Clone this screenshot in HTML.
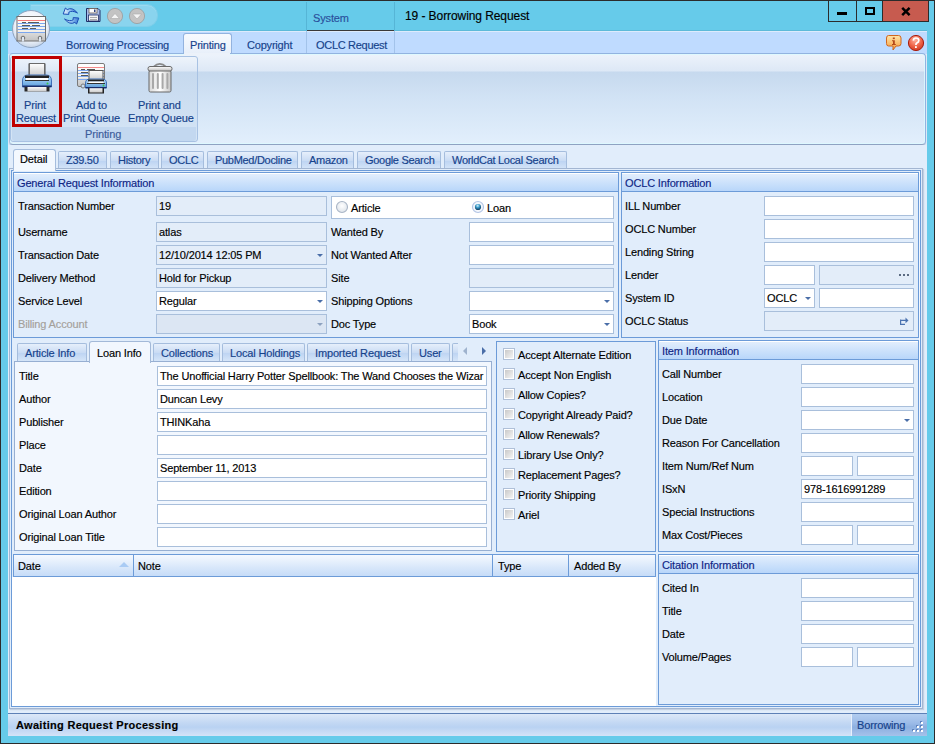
<!DOCTYPE html><html><head><meta charset="utf-8"><style>
*{margin:0;padding:0;box-sizing:content-box}
html,body{width:935px;height:744px;overflow:hidden;background:#66CBEA}
body{position:relative;font-family:"Liberation Sans",sans-serif;font-size:11px;color:#000}
.a{position:absolute}
.t{white-space:nowrap;line-height:13px;font-size:11px;letter-spacing:-0.15px;-webkit-text-stroke:0.15px currentColor}
.tb{border:1px solid #A9BFDB}
.grp{border:1px solid #6C9BD8;background:#E1EDFB}
.ghd{background:linear-gradient(#E4EFFD,#B8D6FA);border-bottom:1px solid #6C9BD8;box-shadow:inset 0 1px 0 #fff}
</style></head><body>
<div class="a" style="left:0px;top:0px;width:935px;height:744px;border:0;background:#66CBEA"></div>
<div class="a" style="left:0px;top:0px;width:935px;height:1px;background:#2B2B2B"></div>
<div class="a" style="left:0px;top:743px;width:935px;height:1px;background:#2B2B2B"></div>
<div class="a" style="left:0px;top:0px;width:1px;height:744px;background:#2B2B2B"></div>
<div class="a" style="left:934px;top:0px;width:1px;height:744px;background:#2B2B2B"></div>
<div class="a" style="left:30px;top:4px;width:126px;height:21px;border-radius:0 11px 11px 0;background:#8AD4EE;border:1px solid #7FCFEA;box-shadow:inset 0 1px 0 #9ADAF0"></div>
<div class="a" style="left:306px;top:2px;width:1px;height:52px;background:#56B5D6"></div>
<div class="a" style="left:394px;top:2px;width:1px;height:52px;background:#56B5D6"></div>
<div class="a" style="left:307px;top:30px;width:87px;height:1px;background:#3A3A3A"></div>
<div class="a t" style="left:313px;top:12px;color:#2A4F9C">System</div>
<div class="a t" style="left:405px;top:10px;font-size:12px;letter-spacing:-0.08px;color:#000">19 - Borrowing Request</div>
<div class="a" style="left:828px;top:0px;width:101px;height:22px;background:#2B2B2B"></div>
<div class="a" style="left:829px;top:1px;width:27px;height:20px;background:#66CBEA"></div>
<div class="a" style="left:857px;top:1px;width:25px;height:20px;background:#66CBEA"></div>
<div class="a" style="left:883px;top:1px;width:45px;height:20px;background:#C75B4F"></div>
<div class="a" style="left:837px;top:12px;width:10px;height:3px;background:#000"></div>
<div class="a" style="left:865px;top:7px;width:6px;height:4px;border:2px solid #000"></div>
<svg class="a" style="left:901px;top:7px" width="10" height="9" viewBox="0 0 10 9"><path d="M1.2 0.9 L8.6 8.1 M8.6 0.9 L1.2 8.1" stroke="#000" stroke-width="2.5"/></svg>
<div class="a" style="left:8px;top:30px;width:919px;height:1px;background:#5DBAD9"></div>
<div class="a" style="left:307px;top:30px;width:87px;height:1px;background:#3A3A3A"></div>
<div class="a" style="left:8px;top:31px;width:919px;height:23px;background:#BFDBFF;border-top:1px solid #DDEBFC"></div>
<div class="a" style="left:183px;top:33px;width:47px;height:22px;border:1px solid #93B3DF;border-bottom:0;border-radius:3px 3px 0 0;background:linear-gradient(#F7FAFE,#E6EEF9)"></div>
<div class="a t" style="left:66px;top:39px;color:#15428B;letter-spacing:-0.2px">Borrowing Processing</div>
<div class="a t" style="left:190px;top:39px;color:#15428B;letter-spacing:-0.2px">Printing</div>
<div class="a t" style="left:247px;top:39px;color:#15428B;letter-spacing:-0.2px">Copyright</div>
<div class="a t" style="left:316px;top:39px;color:#15428B;letter-spacing:-0.3px">OCLC Request</div>
<div class="a" style="left:306px;top:31px;width:1px;height:23px;background:#A3C3EA"></div>
<div class="a" style="left:394px;top:31px;width:1px;height:23px;background:#A3C3EA"></div>
<div class="a" style="left:8px;top:54px;width:919px;height:91px;background:#E1EDFB"></div>
<div class="a" style="left:9px;top:53px;width:915px;height:90px;border:1px solid #92B3E0;border-bottom-color:#8EA2C2;border-left-color:#A9BEDD;border-radius:4px;box-shadow:inset 0 0 0 1px rgba(220,250,255,0.8),0 1px 1px rgba(110,130,170,0.35);background:linear-gradient(#EDF3FB 0,#DDE8F6 17px,#C6D9EE 18px,#D2E3F5 50%,#E2EFFC 100%)"></div>
<div class="a" style="left:184px;top:53px;width:46px;height:2px;background:#ECF2FA"></div>
<div class="a" style="left:10px;top:56px;width:186px;height:84px;border:1px solid #A8C2E3;border-radius:3px;background:linear-gradient(#EEF4FB 0,#DDE8F6 14px,#C6D9EE 15px,#D5E5F6 100%)"></div>
<div class="a" style="left:12px;top:127px;width:184px;height:14px;background:#C3D8F0;border-radius:0 0 3px 3px"></div>
<div class="a t" style="left:85px;top:128px;color:#3C5C9A">Printing</div>
<div class="a" style="left:12px;top:56px;width:44px;height:65px;border:3px solid #C00000"></div>
<div class="a t" style="left:24px;top:99px;color:#15428B">Print</div>
<div class="a t" style="left:16px;top:112px;color:#15428B">Request</div>
<div class="a t" style="left:76px;top:99px;color:#15428B">Add to</div>
<div class="a t" style="left:63px;top:112px;color:#15428B">Print Queue</div>
<div class="a t" style="left:138px;top:99px;color:#15428B">Print and</div>
<div class="a t" style="left:128px;top:112px;color:#15428B">Empty Queue</div>
<svg class="a" style="left:22px;top:63px" width="32" height="32" viewBox="0 0 32 32">
<defs><linearGradient id="pb22" x1="0" y1="0" x2="0" y2="1"><stop offset="0" stop-color="#B9DBF7"/><stop offset="0.5" stop-color="#8EC2EE"/><stop offset="1" stop-color="#5A9BDA"/></linearGradient>
<linearGradient id="pp22" x1="0" y1="0" x2="0" y2="1"><stop offset="0" stop-color="#FFFFFF"/><stop offset="1" stop-color="#C8C8C8"/></linearGradient></defs>
<rect x="6.5" y="0.5" width="17" height="13" fill="#4A4A4A"/>
<rect x="7.5" y="0.5" width="15" height="13" fill="url(#pp22)" stroke="#6A6A6A" stroke-width="1"/>
<path d="M0.5 24 L0.5 18 Q0.5 12 6 12 L24 12 Q29.5 12 29.5 18 L29.5 24 Z" fill="url(#pb22)" stroke="#3E6FB8" stroke-width="1"/>
<rect x="3" y="12.5" width="24" height="2.5" fill="#222"/>
<rect x="4" y="15" width="22" height="2" fill="#FFFFFF"/>
<rect x="3" y="17" width="24" height="1" fill="#333"/>
<circle cx="25.5" cy="20.5" r="1" fill="#3CC84A"/>
<rect x="2.5" y="23" width="25" height="5.5" fill="#2A2A2A"/>
<rect x="5.5" y="23.5" width="19" height="5" fill="url(#pp22)"/>
<rect x="0.5" y="22.5" width="29" height="1.5" fill="#1A2E6A"/>
</svg>
<svg class="a" style="left:77px;top:63px" width="31" height="31" viewBox="0 0 31 31">
<defs><linearGradient id="cg" x1="0" y1="0" x2="0" y2="1"><stop offset="0" stop-color="#FFFFFF"/><stop offset="0.6" stop-color="#F4F0EA"/><stop offset="0.7" stop-color="#D9D9D9"/><stop offset="1" stop-color="#C4C4C4"/></linearGradient></defs>
<rect x="0.5" y="0.5" width="27" height="23" rx="1.5" fill="url(#cg)" stroke="#7A7A7A"/>
<rect x="1" y="4" width="26" height="1" fill="#F58A8A"/>
<rect x="1" y="7" width="26" height="1" fill="#7FA8EE"/>
<rect x="1" y="10" width="26" height="1" fill="#7FA8EE"/>
<rect x="1" y="13" width="26" height="1" fill="#7FA8EE"/>
<rect x="1" y="16" width="26" height="1" fill="#7FA8EE"/>
<rect x="4" y="6" width="4" height="1" fill="#555"/><rect x="10" y="6" width="8" height="1" fill="#555"/>
<rect x="4" y="9" width="7" height="1" fill="#555"/>
<rect x="4" y="12" width="7" height="1" fill="#555"/>
<circle cx="6" cy="23" r="2" fill="#C9DCF2" stroke="#7A7A7A"/>
</svg>
<svg class="a" style="left:85px;top:70px" width="23" height="24" viewBox="0 0 23 24">
<defs><linearGradient id="pb2" x1="0" y1="0" x2="0" y2="1"><stop offset="0" stop-color="#B9DBF7"/><stop offset="1" stop-color="#5A9BDA"/></linearGradient>
<linearGradient id="pp2" x1="0" y1="0" x2="0" y2="1"><stop offset="0" stop-color="#FFFFFF"/><stop offset="1" stop-color="#C8C8C8"/></linearGradient></defs>
<rect x="4" y="0.5" width="14" height="10" fill="url(#pp2)" stroke="#555"/>
<path d="M0.5 18 L0.5 13 Q0.5 9 5 9 L17 9 Q21.5 9 21.5 13 L21.5 18 Z" fill="url(#pb2)" stroke="#3E6FB8"/>
<rect x="3" y="9.5" width="16" height="2" fill="#222"/>
<rect x="3.5" y="11.5" width="15" height="1.5" fill="#fff"/>
<rect x="2" y="13" width="18" height="1" fill="#333"/>
<circle cx="18.5" cy="15.5" r="0.9" fill="#3CC84A"/>
<rect x="3" y="17" width="16" height="6.5" fill="#222"/>
<rect x="4.5" y="17.5" width="13" height="5" fill="url(#pp2)"/>
<rect x="0.5" y="17" width="21" height="1.2" fill="#1A2E6A"/>
</svg>
<svg class="a" style="left:147px;top:62px" width="26" height="31" viewBox="0 0 26 31">
<defs><linearGradient id="tg" x1="0" y1="0" x2="1" y2="0"><stop offset="0" stop-color="#D8D8D8"/><stop offset="0.5" stop-color="#FFFFFF"/><stop offset="1" stop-color="#C8C8C8"/></linearGradient>
<linearGradient id="tl" x1="0" y1="0" x2="0" y2="1"><stop offset="0" stop-color="#FFFFFF"/><stop offset="1" stop-color="#BDBDBD"/></linearGradient></defs>
<path d="M6.5 4.8 Q12.8 -1.2 19.2 4.8" fill="none" stroke="#8A8A8A" stroke-width="1.6"/>
<rect x="2" y="8.5" width="22" height="21.5" rx="1.5" fill="url(#tg)" stroke="#666"/>
<rect x="1" y="4.5" width="24" height="4.5" rx="2" fill="url(#tl)" stroke="#6A6A6A"/>
<rect x="5" y="11" width="2" height="16" rx="1" fill="#A8A8A8"/>
<rect x="9.8" y="11" width="2" height="16" rx="1" fill="#A8A8A8"/>
<rect x="14.6" y="11" width="2" height="16" rx="1" fill="#A8A8A8"/>
<rect x="19.4" y="11" width="2" height="16" rx="1" fill="#A8A8A8"/>
</svg>
<svg class="a" style="left:11px;top:9px" width="40" height="40" viewBox="0 0 40 40">
<defs><radialGradient id="ag" cx="0.5" cy="0.4" r="0.6"><stop offset="0" stop-color="#FFFFFF"/><stop offset="0.7" stop-color="#EEF3FA"/><stop offset="1" stop-color="#C6D4E6"/></radialGradient>
<linearGradient id="acg" x1="0" y1="0" x2="0" y2="1"><stop offset="0" stop-color="#FFFFFF"/><stop offset="0.65" stop-color="#F2EEE6"/><stop offset="0.68" stop-color="#DADADA"/><stop offset="1" stop-color="#C2C2C2"/></linearGradient></defs>
<circle cx="20" cy="20" r="18.5" fill="url(#ag)" stroke="#8DA3C0" stroke-width="1"/>
<rect x="6" y="7.5" width="28.5" height="24.5" fill="url(#acg)" stroke="#6E6E6E"/>
<rect x="6.5" y="11" width="27.5" height="1" fill="#F47A7A"/>
<rect x="6.5" y="14" width="27.5" height="1" fill="#7BA6EE"/>
<rect x="6.5" y="17" width="27.5" height="1" fill="#7BA6EE"/>
<rect x="6.5" y="20" width="27.5" height="1" fill="#7BA6EE"/>
<rect x="6.5" y="23" width="27.5" height="1" fill="#7BA6EE"/>
<rect x="11" y="13" width="4" height="1" fill="#5A5A5A"/><rect x="17" y="13" width="11" height="1" fill="#5A5A5A"/>
<rect x="11" y="16" width="8" height="1" fill="#5A5A5A"/><rect x="21" y="16" width="8" height="1" fill="#5A5A5A"/>
<rect x="11" y="19" width="6" height="1" fill="#5A5A5A"/><rect x="19" y="19" width="6" height="1" fill="#5A5A5A"/>
<circle cx="12" cy="29" r="1.8" fill="#DDE6F2" stroke="#6E6E6E"/>
<circle cx="29" cy="29" r="1.8" fill="#DDE6F2" stroke="#6E6E6E"/>
<rect x="11" y="29" width="2" height="3.5" fill="#DDE6F2"/><rect x="28" y="29" width="2" height="3.5" fill="#DDE6F2"/>
</svg>
<svg class="a" style="left:60px;top:6px" width="22" height="20" viewBox="0 0 22 20">
<defs><linearGradient id="rg" x1="0" y1="0" x2="1" y2="0"><stop offset="0" stop-color="#F0F8FF"/><stop offset="0.5" stop-color="#8FC0F0"/><stop offset="1" stop-color="#3A7BD5"/></linearGradient></defs>
<path d="M3.2 8 L5.4 2 L7.2 3.6 Q12 0.6 17.5 7 Q12 4 8.8 6.3 L8.8 8.4 Z" fill="url(#rg)" stroke="#1A4DB5" stroke-width="1" stroke-linejoin="round"/>
<path d="M18.8 12 L16.6 18 L14.8 16.4 Q10 19.4 4.5 13 Q10 16 13.2 13.7 L13.2 11.6 Z" fill="url(#rg)" stroke="#1A4DB5" stroke-width="1" stroke-linejoin="round"/>
</svg>
<svg class="a" style="left:86px;top:8px" width="15" height="15" viewBox="0 0 15 15">
<path d="M0.5 0.5 L12 0.5 L14 2.5 L14 13.5 L0.5 13.5 Z" fill="#A9BCE8" stroke="#1F2F66"/>
<rect x="3" y="0.5" width="8" height="4.5" fill="#FFFFFF" stroke="#6F6054" stroke-width="0.8"/>
<rect x="8" y="1.5" width="1.5" height="2.5" fill="#2A3E7A"/>
<rect x="2.5" y="7" width="10" height="6" fill="#F5F5F5" stroke="#1F2F66" stroke-width="0.8"/>
<rect x="4" y="9" width="7" height="0.8" fill="#9A9A9A"/><rect x="4" y="11" width="7" height="0.8" fill="#9A9A9A"/>
</svg>
<svg class="a" style="left:106px;top:7px" width="40" height="18" viewBox="0 0 40 18">
<circle cx="9" cy="9" r="7.6" fill="#C3C3C3" stroke="#9B9B9B" stroke-width="0.8"/>
<path d="M4.5 11.5 L9 6.5 L13.5 11.5 Z" fill="#F4F4F4" stroke="#A9A9A9" stroke-width="0.6"/>
<circle cx="31" cy="9" r="7.6" fill="#C3C3C3" stroke="#9B9B9B" stroke-width="0.8"/>
<path d="M26.5 7 L31 12 L35.5 7 Z" fill="#F4F4F4" stroke="#A9A9A9" stroke-width="0.6"/>
</svg>
<svg class="a" style="left:885px;top:34px" width="40" height="18" viewBox="0 0 40 18">
<defs><linearGradient id="ig" x1="0" y1="0" x2="0" y2="1"><stop offset="0" stop-color="#FFE6A8"/><stop offset="1" stop-color="#F59A3A"/></linearGradient>
<radialGradient id="hg" cx="0.45" cy="0.3" r="0.7"><stop offset="0" stop-color="#FFB3A0"/><stop offset="0.6" stop-color="#EE6448"/><stop offset="1" stop-color="#D23C22"/></radialGradient></defs>
<path d="M3.5 1.5 L13.5 1.5 Q16 1.5 16 4 L16 9.5 Q16 12 13.5 12 L11 12 L8 16 L8 12 L3.5 12 Q1.5 12 1.5 9.5 L1.5 4 Q1.5 1.5 3.5 1.5 Z" fill="url(#ig)" stroke="#D0661E" stroke-width="1"/>
<rect x="7.8" y="3.5" width="2" height="1.6" fill="#B5481A"/>
<path d="M7 6.3 L9.8 6.3 L9.8 10 L10.8 10 L10.8 11 L7 11 L7 10 L8 10 L8 7.3 L7 7.3 Z" fill="#B5481A"/>
<circle cx="31" cy="9" r="7.6" fill="url(#hg)" stroke="#A81E10" stroke-width="1"/>
<path d="M28.3 6.6 Q28.5 4 31 4 Q33.8 4 33.8 6.4 Q33.8 8 31.8 9 Q30.9 9.6 30.9 11" fill="none" stroke="#fff" stroke-width="1.7"/>
<rect x="30" y="12.2" width="1.8" height="1.8" fill="#fff"/>
</svg>
<div class="a" style="left:8px;top:145px;width:919px;height:568px;background:#E1EDFB"></div>
<div class="a" style="left:13px;top:149px;width:41px;height:21px;border:1px solid #A5BDDD;border-bottom:0;border-radius:3px 3px 0 0;background:#F3F8FE;z-index:2"></div>
<div class="a t" style="left:20px;top:153px;color:#000;z-index:3">Detail</div>
<div class="a" style="left:58px;top:151px;width:47px;height:17px;border:1px solid #A5BDDD;border-bottom:0;border-radius:2px 2px 0 0;background:linear-gradient(#E6EFFB,#CADCF4 50%,#BCD3F2 51%,#D5E5F8)"></div>
<div class="a t" style="left:66px;top:154px;color:#15428B;letter-spacing:-0.3px">Z39.50</div>
<div class="a" style="left:110px;top:151px;width:47px;height:17px;border:1px solid #A5BDDD;border-bottom:0;border-radius:2px 2px 0 0;background:linear-gradient(#E6EFFB,#CADCF4 50%,#BCD3F2 51%,#D5E5F8)"></div>
<div class="a t" style="left:118px;top:154px;color:#15428B;letter-spacing:-0.3px">History</div>
<div class="a" style="left:161px;top:151px;width:41px;height:17px;border:1px solid #A5BDDD;border-bottom:0;border-radius:2px 2px 0 0;background:linear-gradient(#E6EFFB,#CADCF4 50%,#BCD3F2 51%,#D5E5F8)"></div>
<div class="a t" style="left:169px;top:154px;color:#15428B;letter-spacing:-0.3px">OCLC</div>
<div class="a" style="left:207px;top:151px;width:89px;height:17px;border:1px solid #A5BDDD;border-bottom:0;border-radius:2px 2px 0 0;background:linear-gradient(#E6EFFB,#CADCF4 50%,#BCD3F2 51%,#D5E5F8)"></div>
<div class="a t" style="left:215px;top:154px;color:#15428B;letter-spacing:-0.3px">PubMed/Docline</div>
<div class="a" style="left:301px;top:151px;width:51px;height:17px;border:1px solid #A5BDDD;border-bottom:0;border-radius:2px 2px 0 0;background:linear-gradient(#E6EFFB,#CADCF4 50%,#BCD3F2 51%,#D5E5F8)"></div>
<div class="a t" style="left:309px;top:154px;color:#15428B;letter-spacing:-0.3px">Amazon</div>
<div class="a" style="left:357px;top:151px;width:82px;height:17px;border:1px solid #A5BDDD;border-bottom:0;border-radius:2px 2px 0 0;background:linear-gradient(#E6EFFB,#CADCF4 50%,#BCD3F2 51%,#D5E5F8)"></div>
<div class="a t" style="left:365px;top:154px;color:#15428B;letter-spacing:-0.3px">Google Search</div>
<div class="a" style="left:444px;top:151px;width:121px;height:17px;border:1px solid #A5BDDD;border-bottom:0;border-radius:2px 2px 0 0;background:linear-gradient(#E6EFFB,#CADCF4 50%,#BCD3F2 51%,#D5E5F8)"></div>
<div class="a t" style="left:452px;top:154px;color:#15428B;letter-spacing:-0.3px">WorldCat Local Search</div>
<div class="a" style="left:9px;top:168px;width:912px;height:539px;border:1px solid #A3B6D2;box-shadow:1px 1px 1px #C3D0E2"></div>
<div class="a" style="left:11px;top:170px;width:908px;height:535px;border:1px solid #6C9BD8;background:#F2F7FE"></div>
<div class="a" style="left:12px;top:171px;width:907px;height:535px;background:#E1EDFB"></div>
<div class="a grp" style="left:13px;top:172px;width:604px;height:164px"></div>
<div class="a ghd" style="left:14px;top:173px;width:604px;height:18px"></div>
<div class="a t" style="left:17px;top:177px;color:#0E2585">General Request Information</div>
<div class="a t" style="left:18px;top:200px;color:#000">Transaction Number</div>
<div class="a tb" style="left:156px;top:196px;width:169px;height:18px;background:#E3EDF9;"></div>
<div class="a t" style="left:159px;top:200px;">19</div>
<div class="a t" style="left:18px;top:226px;color:#000">Username</div>
<div class="a tb" style="left:156px;top:222px;width:169px;height:18px;background:#E3EDF9;"></div>
<div class="a t" style="left:159px;top:226px;">atlas</div>
<div class="a t" style="left:18px;top:249px;color:#000">Transaction Date</div>
<div class="a tb" style="left:156px;top:245px;width:169px;height:18px;background:#E3EDF9;"></div>
<div class="a t" style="left:159px;top:249px;">12/10/2014 12:05 PM</div>
<div class="a" style="left:317px;top:254px;width:0;height:0;border-left:3px solid transparent;border-right:3px solid transparent;border-top:3px solid #4A6EA8"></div>
<div class="a t" style="left:18px;top:272px;color:#000">Delivery Method</div>
<div class="a tb" style="left:156px;top:268px;width:169px;height:18px;background:#E3EDF9;"></div>
<div class="a t" style="left:159px;top:272px;">Hold for Pickup</div>
<div class="a t" style="left:18px;top:295px;color:#000">Service Level</div>
<div class="a tb" style="left:156px;top:291px;width:169px;height:18px;background:#fff;"></div>
<div class="a t" style="left:159px;top:295px;">Regular</div>
<div class="a" style="left:317px;top:300px;width:0;height:0;border-left:3px solid transparent;border-right:3px solid transparent;border-top:3px solid #4A6EA8"></div>
<div class="a t" style="left:18px;top:318px;color:#A4A09A">Billing Account</div>
<div class="a tb" style="left:156px;top:314px;width:169px;height:18px;background:#DCE6F3;"></div>
<div class="a" style="left:317px;top:323px;width:0;height:0;border-left:3px solid transparent;border-right:3px solid transparent;border-top:3px solid #8DA2C0"></div>
<div class="a tb" style="left:331px;top:196px;width:281px;height:21px;background:#fff;"></div>
<svg class="a" style="left:335px;top:200px" width="14" height="14" viewBox="0 0 14 14"><defs><radialGradient id="ra" cx="0.5" cy="0.4" r="0.6"><stop offset="0" stop-color="#FFFFFF"/><stop offset="1" stop-color="#DDE3EA"/></radialGradient></defs><circle cx="7" cy="7" r="5.5" fill="url(#ra)" stroke="#A9B5C6" stroke-width="1.1"/></svg>
<div class="a t" style="left:351px;top:202px;">Article</div>
<svg class="a" style="left:471px;top:200px" width="14" height="14" viewBox="0 0 14 14"><defs><radialGradient id="rd" cx="0.45" cy="0.3" r="0.6"><stop offset="0" stop-color="#D8F2FB"/><stop offset="0.5" stop-color="#3A9CCB"/><stop offset="1" stop-color="#174C72"/></radialGradient></defs><circle cx="7" cy="7" r="5.5" fill="#F4F7FC" stroke="#B3C5E5" stroke-width="1.2"/><circle cx="7" cy="7" r="3.1" fill="url(#rd)"/></svg>
<div class="a t" style="left:487px;top:202px;">Loan</div>
<div class="a t" style="left:331px;top:226px;">Wanted By</div>
<div class="a tb" style="left:469px;top:222px;width:143px;height:18px;background:#fff;"></div>
<div class="a t" style="left:331px;top:249px;">Not Wanted After</div>
<div class="a tb" style="left:469px;top:245px;width:143px;height:18px;background:#fff;"></div>
<div class="a t" style="left:331px;top:272px;">Site</div>
<div class="a tb" style="left:469px;top:268px;width:143px;height:18px;background:#E3EDF9;"></div>
<div class="a t" style="left:331px;top:295px;">Shipping Options</div>
<div class="a tb" style="left:469px;top:291px;width:143px;height:18px;background:#fff;"></div>
<div class="a" style="left:604px;top:300px;width:0;height:0;border-left:3px solid transparent;border-right:3px solid transparent;border-top:3px solid #4A6EA8"></div>
<div class="a t" style="left:331px;top:318px;">Doc Type</div>
<div class="a tb" style="left:469px;top:314px;width:143px;height:18px;background:#fff;"></div>
<div class="a t" style="left:472px;top:318px;">Book</div>
<div class="a" style="left:604px;top:323px;width:0;height:0;border-left:3px solid transparent;border-right:3px solid transparent;border-top:3px solid #4A6EA8"></div>
<div class="a grp" style="left:621px;top:172px;width:296px;height:164px"></div>
<div class="a ghd" style="left:622px;top:173px;width:296px;height:18px"></div>
<div class="a t" style="left:625px;top:177px;color:#0E2585">OCLC Information</div>
<div class="a t" style="left:625px;top:200px;">ILL Number</div>
<div class="a t" style="left:625px;top:223px;">OCLC Number</div>
<div class="a t" style="left:625px;top:246px;">Lending String</div>
<div class="a t" style="left:625px;top:269px;">Lender</div>
<div class="a t" style="left:625px;top:292px;">System ID</div>
<div class="a t" style="left:625px;top:315px;">OCLC Status</div>
<div class="a tb" style="left:764px;top:196px;width:148px;height:18px;background:#fff;"></div>
<div class="a tb" style="left:764px;top:219px;width:148px;height:18px;background:#fff;"></div>
<div class="a tb" style="left:764px;top:242px;width:148px;height:18px;background:#fff;"></div>
<div class="a tb" style="left:764px;top:265px;width:49px;height:18px;background:#fff;"></div>
<div class="a tb" style="left:819px;top:265px;width:93px;height:18px;background:#E3EDF9;"></div>
<div class="a" style="left:899px;top:274px;width:2px;height:2px;background:#5B6B82"></div>
<div class="a" style="left:903px;top:274px;width:2px;height:2px;background:#5B6B82"></div>
<div class="a" style="left:907px;top:274px;width:2px;height:2px;background:#5B6B82"></div>
<div class="a tb" style="left:764px;top:288px;width:49px;height:18px;background:#fff;"></div>
<div class="a t" style="left:767px;top:292px;">OCLC</div>
<div class="a" style="left:805px;top:297px;width:0;height:0;border-left:3px solid transparent;border-right:3px solid transparent;border-top:3px solid #4A6EA8"></div>
<div class="a tb" style="left:819px;top:288px;width:93px;height:18px;background:#fff;"></div>
<div class="a tb" style="left:764px;top:311px;width:148px;height:18px;background:#E3EDF9;"></div>
<svg class="a" style="left:899px;top:315px" width="11" height="11" viewBox="0 0 11 11"><path d="M1.6 4.5 L1.6 9.4 L6 9.4 M1.6 5.4 L7 5.4" fill="none" stroke="#4A72B0" stroke-width="1.2"/><path d="M6.5 2.5 L9.5 5.4 L6.5 8.3 Z" fill="#4A72B0"/></svg>
<div class="a" style="left:14px;top:361px;width:476px;height:188px;border:1px solid #97AFD2;background:#F2F7FE"></div>
<div class="a" style="left:17px;top:343px;width:68px;height:17px;border:1px solid #A5BDDD;border-bottom:0;border-radius:2px 2px 0 0;background:linear-gradient(#E6EFFB,#CADCF4 50%,#BCD3F2 51%,#D5E5F8)"></div>
<div class="a t" style="left:25px;top:347px;color:#15428B">Article Info</div>
<div class="a" style="left:89px;top:341px;width:60px;height:21px;border:1px solid #A3B9D8;border-bottom:0;border-radius:3px 3px 0 0;background:#F2F7FE"></div>
<div class="a t" style="left:97px;top:347px;">Loan Info</div>
<div class="a" style="left:153px;top:343px;width:65px;height:17px;border:1px solid #A5BDDD;border-bottom:0;border-radius:2px 2px 0 0;background:linear-gradient(#E6EFFB,#CADCF4 50%,#BCD3F2 51%,#D5E5F8)"></div>
<div class="a t" style="left:161px;top:347px;color:#15428B">Collections</div>
<div class="a" style="left:222px;top:343px;width:81px;height:17px;border:1px solid #A5BDDD;border-bottom:0;border-radius:2px 2px 0 0;background:linear-gradient(#E6EFFB,#CADCF4 50%,#BCD3F2 51%,#D5E5F8)"></div>
<div class="a t" style="left:230px;top:347px;color:#15428B">Local Holdings</div>
<div class="a" style="left:307px;top:343px;width:100px;height:17px;border:1px solid #A5BDDD;border-bottom:0;border-radius:2px 2px 0 0;background:linear-gradient(#E6EFFB,#CADCF4 50%,#BCD3F2 51%,#D5E5F8)"></div>
<div class="a t" style="left:315px;top:347px;color:#15428B">Imported Request</div>
<div class="a" style="left:411px;top:343px;width:37px;height:17px;border:1px solid #A5BDDD;border-bottom:0;border-radius:2px 2px 0 0;background:linear-gradient(#E6EFFB,#CADCF4 50%,#BCD3F2 51%,#D5E5F8)"></div>
<div class="a t" style="left:419px;top:347px;color:#15428B">User</div>
<div class="a" style="left:452px;top:343px;width:10px;height:17px;border:1px solid #A5BDDD;border-bottom:0;border-radius:2px 2px 0 0;background:linear-gradient(#E6EFFB,#CADCF4 50%,#BCD3F2 51%,#D5E5F8)"></div>
<div class="a" style="left:458px;top:343px;width:34px;height:18px;background:#E1EDFB"></div>
<div class="a" style="left:463px;top:347px;width:0;height:0;border-top:4px solid transparent;border-bottom:4px solid transparent;border-right:4px solid #9FB3CE"></div>
<div class="a" style="left:482px;top:347px;width:0;height:0;border-top:4px solid transparent;border-bottom:4px solid transparent;border-left:4px solid #4A6EA8"></div>
<div class="a t" style="left:19px;top:370px;">Title</div>
<div class="a tb" style="left:157px;top:366px;width:328px;height:18px;background:#fff;"></div>
<div class="a t" style="left:160px;top:370px;">The Unofficial Harry Potter Spellbook: The Wand Chooses the Wizar</div>
<div class="a t" style="left:19px;top:393px;">Author</div>
<div class="a tb" style="left:157px;top:389px;width:328px;height:18px;background:#fff;"></div>
<div class="a t" style="left:160px;top:393px;">Duncan Levy</div>
<div class="a t" style="left:19px;top:416px;">Publisher</div>
<div class="a tb" style="left:157px;top:412px;width:328px;height:18px;background:#fff;"></div>
<div class="a t" style="left:160px;top:416px;">THINKaha</div>
<div class="a t" style="left:19px;top:439px;">Place</div>
<div class="a tb" style="left:157px;top:435px;width:328px;height:18px;background:#fff;"></div>
<div class="a t" style="left:19px;top:462px;">Date</div>
<div class="a tb" style="left:157px;top:458px;width:328px;height:18px;background:#fff;"></div>
<div class="a t" style="left:160px;top:462px;">September 11, 2013</div>
<div class="a t" style="left:19px;top:485px;">Edition</div>
<div class="a tb" style="left:157px;top:481px;width:328px;height:18px;background:#fff;"></div>
<div class="a t" style="left:19px;top:508px;">Original Loan Author</div>
<div class="a tb" style="left:157px;top:504px;width:328px;height:18px;background:#fff;"></div>
<div class="a t" style="left:19px;top:531px;">Original Loan Title</div>
<div class="a tb" style="left:157px;top:527px;width:328px;height:18px;background:#fff;"></div>
<div class="a" style="left:496px;top:341px;width:158px;height:209px;border:1px solid #6C9BD8;background:#E1EDFB"></div>
<div class="a" style="left:503px;top:348px;width:10px;height:10px;border:1px solid #AFC0D8;box-shadow:inset 0 0 0 1px #fff;background:linear-gradient(135deg,#C4C4C4,#FAFAFA)"></div>
<div class="a t" style="left:518px;top:349px;">Accept Alternate Edition</div>
<div class="a" style="left:503px;top:368px;width:10px;height:10px;border:1px solid #AFC0D8;box-shadow:inset 0 0 0 1px #fff;background:linear-gradient(135deg,#C4C4C4,#FAFAFA)"></div>
<div class="a t" style="left:518px;top:369px;">Accept Non English</div>
<div class="a" style="left:503px;top:388px;width:10px;height:10px;border:1px solid #AFC0D8;box-shadow:inset 0 0 0 1px #fff;background:linear-gradient(135deg,#C4C4C4,#FAFAFA)"></div>
<div class="a t" style="left:518px;top:389px;">Allow Copies?</div>
<div class="a" style="left:503px;top:408px;width:10px;height:10px;border:1px solid #AFC0D8;box-shadow:inset 0 0 0 1px #fff;background:linear-gradient(135deg,#C4C4C4,#FAFAFA)"></div>
<div class="a t" style="left:518px;top:409px;">Copyright Already Paid?</div>
<div class="a" style="left:503px;top:428px;width:10px;height:10px;border:1px solid #AFC0D8;box-shadow:inset 0 0 0 1px #fff;background:linear-gradient(135deg,#C4C4C4,#FAFAFA)"></div>
<div class="a t" style="left:518px;top:429px;">Allow Renewals?</div>
<div class="a" style="left:503px;top:448px;width:10px;height:10px;border:1px solid #AFC0D8;box-shadow:inset 0 0 0 1px #fff;background:linear-gradient(135deg,#C4C4C4,#FAFAFA)"></div>
<div class="a t" style="left:518px;top:449px;">Library Use Only?</div>
<div class="a" style="left:503px;top:468px;width:10px;height:10px;border:1px solid #AFC0D8;box-shadow:inset 0 0 0 1px #fff;background:linear-gradient(135deg,#C4C4C4,#FAFAFA)"></div>
<div class="a t" style="left:518px;top:469px;">Replacement Pages?</div>
<div class="a" style="left:503px;top:488px;width:10px;height:10px;border:1px solid #AFC0D8;box-shadow:inset 0 0 0 1px #fff;background:linear-gradient(135deg,#C4C4C4,#FAFAFA)"></div>
<div class="a t" style="left:518px;top:489px;">Priority Shipping</div>
<div class="a" style="left:503px;top:508px;width:10px;height:10px;border:1px solid #AFC0D8;box-shadow:inset 0 0 0 1px #fff;background:linear-gradient(135deg,#C4C4C4,#FAFAFA)"></div>
<div class="a t" style="left:518px;top:509px;">Ariel</div>
<div class="a grp" style="left:658px;top:340px;width:259px;height:210px"></div>
<div class="a ghd" style="left:659px;top:341px;width:259px;height:18px"></div>
<div class="a t" style="left:662px;top:345px;color:#0E2585">Item Information</div>
<div class="a t" style="left:662px;top:368px;">Call Number</div>
<div class="a tb" style="left:801px;top:364px;width:111px;height:18px;background:#fff;"></div>
<div class="a t" style="left:662px;top:391px;">Location</div>
<div class="a tb" style="left:801px;top:387px;width:111px;height:18px;background:#fff;"></div>
<div class="a t" style="left:662px;top:414px;">Due Date</div>
<div class="a tb" style="left:801px;top:410px;width:111px;height:18px;background:#fff;"></div>
<div class="a" style="left:904px;top:419px;width:0;height:0;border-left:3px solid transparent;border-right:3px solid transparent;border-top:3px solid #4A6EA8"></div>
<div class="a t" style="left:662px;top:437px;">Reason For Cancellation</div>
<div class="a tb" style="left:801px;top:433px;width:111px;height:18px;background:#fff;"></div>
<div class="a t" style="left:662px;top:460px;">Item Num/Ref Num</div>
<div class="a tb" style="left:801px;top:456px;width:50px;height:18px;background:#fff;"></div>
<div class="a tb" style="left:857px;top:456px;width:55px;height:18px;background:#fff;"></div>
<div class="a t" style="left:662px;top:483px;">ISxN</div>
<div class="a tb" style="left:801px;top:479px;width:111px;height:18px;background:#fff;"></div>
<div class="a t" style="left:804px;top:483px;">978-1616991289</div>
<div class="a t" style="left:662px;top:506px;">Special Instructions</div>
<div class="a tb" style="left:801px;top:502px;width:111px;height:18px;background:#fff;"></div>
<div class="a t" style="left:662px;top:529px;">Max Cost/Pieces</div>
<div class="a tb" style="left:801px;top:525px;width:50px;height:18px;background:#fff;"></div>
<div class="a tb" style="left:857px;top:525px;width:55px;height:18px;background:#fff;"></div>
<div class="a" style="left:13px;top:554px;width:641px;height:21px;border:1px solid #6C9BD8;background:linear-gradient(#F5F9FF,#D8E7FA 60%,#C6DCF8)"></div>
<div class="a" style="left:12px;top:577px;width:644px;height:129px;background:#fff"></div>
<div class="a" style="left:133px;top:555px;width:1px;height:21px;background:#6C9BD8"></div>
<div class="a" style="left:492px;top:555px;width:1px;height:21px;background:#6C9BD8"></div>
<div class="a" style="left:568px;top:555px;width:1px;height:21px;background:#6C9BD8"></div>
<div class="a t" style="left:18px;top:560px;">Date</div>
<div class="a" style="left:119px;top:562px;width:0;height:0;border-left:5px solid transparent;border-right:5px solid transparent;border-bottom:5px solid #A9CBF4"></div>
<div class="a t" style="left:138px;top:560px;">Note</div>
<div class="a t" style="left:498px;top:560px;">Type</div>
<div class="a t" style="left:574px;top:560px;">Added By</div>
<div class="a grp" style="left:658px;top:554px;width:259px;height:149px"></div>
<div class="a ghd" style="left:659px;top:555px;width:259px;height:18px"></div>
<div class="a t" style="left:662px;top:559px;color:#0E2585">Citation Information</div>
<div class="a t" style="left:662px;top:582px;">Cited In</div>
<div class="a tb" style="left:801px;top:578px;width:111px;height:18px;background:#fff;"></div>
<div class="a t" style="left:662px;top:605px;">Title</div>
<div class="a tb" style="left:801px;top:601px;width:111px;height:18px;background:#fff;"></div>
<div class="a t" style="left:662px;top:628px;">Date</div>
<div class="a tb" style="left:801px;top:624px;width:111px;height:18px;background:#fff;"></div>
<div class="a t" style="left:662px;top:651px;">Volume/Pages</div>
<div class="a tb" style="left:801px;top:647px;width:50px;height:18px;background:#fff;"></div>
<div class="a tb" style="left:857px;top:647px;width:55px;height:18px;background:#fff;"></div>
<div class="a" style="left:8px;top:713px;width:919px;height:22px;border-top:1px solid #5D80B6;background:linear-gradient(#DCE8F8,#C3D8F3 40%,#B9D2F2 60%,#D4E3F7)"></div>
<div class="a t" style="left:16px;top:719px;font-weight:bold;letter-spacing:0.3px">Awaiting Request Processing</div>
<div class="a" style="left:851px;top:714px;width:75px;height:22px;border-left:1px solid #E8F0FB;background:linear-gradient(#B2CDF0,#9DBCE8 40%,#8CAFE0 60%,#A5C2EA)"></div>
<div class="a t" style="left:857px;top:719px;color:#15428B">Borrowing</div>
<div class="a" style="left:920px;top:721px;width:2px;height:2px;background:#5F82BC"></div>
<div class="a" style="left:921px;top:722px;width:2px;height:2px;background:#fff"></div>
<div class="a" style="left:916px;top:725px;width:2px;height:2px;background:#5F82BC"></div>
<div class="a" style="left:917px;top:726px;width:2px;height:2px;background:#fff"></div>
<div class="a" style="left:920px;top:725px;width:2px;height:2px;background:#5F82BC"></div>
<div class="a" style="left:921px;top:726px;width:2px;height:2px;background:#fff"></div>
<div class="a" style="left:912px;top:729px;width:2px;height:2px;background:#5F82BC"></div>
<div class="a" style="left:913px;top:730px;width:2px;height:2px;background:#fff"></div>
<div class="a" style="left:916px;top:729px;width:2px;height:2px;background:#5F82BC"></div>
<div class="a" style="left:917px;top:730px;width:2px;height:2px;background:#fff"></div>
<div class="a" style="left:920px;top:729px;width:2px;height:2px;background:#5F82BC"></div>
<div class="a" style="left:921px;top:730px;width:2px;height:2px;background:#fff"></div>
</body></html>
